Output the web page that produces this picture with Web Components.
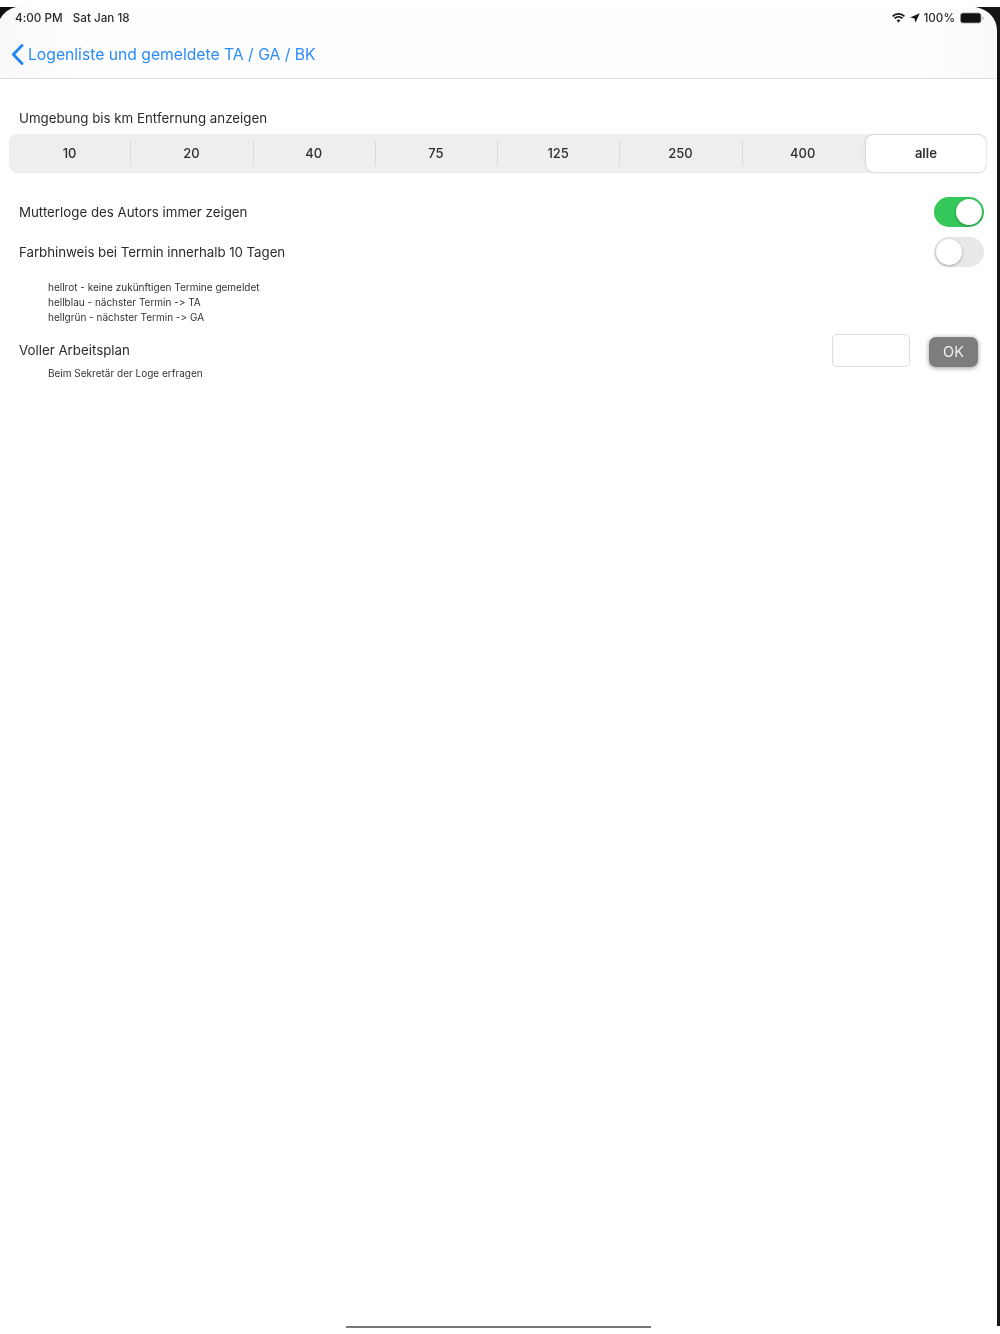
<!DOCTYPE html>
<html lang="de"><head><meta charset="utf-8"><title>Einstellungen</title>
<style>html,body{margin:0;padding:0;background:#fff}body{font-family:Inter,"Liberation Sans",sans-serif;color:#222;font-variant-ligatures:none;font-feature-settings:"calt" 0}</style>
</head><body>
<ipad-screen>
  <status-bar slot="top"></status-bar>
  <nav-bar slot="top" label="Logenliste und gemeldete TA / GA / BK"></nav-bar>
  <field-label style="margin:29px 0 0 19px">Umgebung bis km Entfernung anzeigen</field-label>
  <segment-control style="margin:6px 14px 0 9px" items="10,20,40,75,125,250,400,alle" selected="7"></segment-control>
  <setting-row style="margin-top:24px"><field-label>Mutterloge des Autors immer zeigen</field-label><toggle-switch on slot="end"></toggle-switch></setting-row>
  <setting-row style="margin-top:10px"><field-label style="letter-spacing:-.05px">Farbhinweis bei Termin innerhalb 10 Tagen</field-label><toggle-switch slot="end"></toggle-switch></setting-row>
  <hint-text style="margin-top:12.5px;line-height:15px"><div>hellrot - keine zukünftigen Termine gemeldet</div><div>hellblau - nächster Termin -&gt; TA</div><div>hellgrün - nächster Termin -&gt; GA</div></hint-text>
  <plan-row style="margin-top:9px"></plan-row>
  <home-bar></home-bar>
</ipad-screen>
<script>
function def(name, css, html, init){
  customElements.define(name, class extends HTMLElement{
    constructor(){super();const r=this.attachShadow({mode:'open'});r.innerHTML='<style>'+css+'</style>'+(typeof html==='function'?html(this):html);}
    connectedCallback(){if(init)init(this);}
  });
}
def('ipad-screen',`:host{display:flex;flex-direction:column;position:relative;width:1000px;height:1334px;overflow:hidden;background:#fff;filter:blur(.45px)}
 .top{display:block;padding-top:7px;height:71px;border-bottom:1px solid #e0e0e0;background:linear-gradient(90deg,#f9f9f9,#fefefe 8%,#fefefe 92%,#f9f9f9)}
 .frame{position:absolute;left:0;top:0;pointer-events:none}`,
 `<div class="top"><slot name="top"></slot></div><slot></slot>
 <svg class="frame" width="1000" height="1334" viewBox="0 0 1000 1334">
  <path d="M0 0H1000V7H0Z" fill="#fff"/>
  <path d="M0 7H16Q6 9 0 19Z" fill="#111"/>
  <path d="M976 7H1000V1326H997V30Q996 12 976 7Z" fill="#151515"/>
 </svg>`);
def('status-bar',`:host{display:flex;justify-content:space-between;align-items:center;height:22px;padding:0 16px 0 15px;font-size:11.7px;font-weight:500;color:#2a2a2a}
 .l span{margin-left:7px}.r{display:flex;align-items:center}svg{display:block}`,
 `<div class="l">4:00 PM <span>Sat Jan 18</span></div>
 <div class="r">
  <svg width="13" height="10" viewBox="0 0 15 11"><path d="M.6 3.6a10 10 0 0 1 13.8 0" fill="none" stroke="#111" stroke-width="2"/><path d="M3 6a6.6 6.6 0 0 1 9 0" fill="none" stroke="#111" stroke-width="2"/><path d="M5.3 8.2l2.2 2.4 2.2-2.4a3.2 3.2 0 0 0-4.4 0Z" fill="#111"/></svg>
  <svg width="10" height="10" viewBox="0 0 10 10" style="margin:0 3px 0 5px"><path d="M9.8.2 .2 4.6l4.4.8.8 4.4Z" fill="#111"/></svg>
  <span>100%</span>
  <svg width="24" height="12" viewBox="0 0 24 12" style="margin-left:5px"><rect x=".5" y="1" width="20.5" height="10" rx="2.5" fill="#111" stroke="#999" stroke-width=".8"/><path d="M22.3 4.2q1.4.6 1.4 1.8t-1.4 1.8Z" fill="#aaa"/></svg>
 </div>`);
def('nav-bar',`:host{display:flex;align-items:center;height:49px;padding:1px 0 0 11px;box-sizing:border-box;color:#2b8cf7;font-size:15.7px}
 svg{display:block;margin-right:4px}`,
 h=>`<svg width="13" height="21" viewBox="0 0 13 21"><path d="M11 1.5 2.3 10.5 11 19.5" fill="none" stroke="#1e85f5" stroke-width="2.8" stroke-linecap="round" stroke-linejoin="round"/></svg><span>${h.getAttribute('label')}</span>`);
def('field-label',`:host{display:block;font-size:13.3px;line-height:20px;color:#2b2b2b}`,`<slot></slot>`);
def('segment-control',`:host{display:grid;grid-template-columns:121.4fr repeat(7,122.4fr);height:39px;border-radius:8px;background:#eeeeee;font-size:13px;font-weight:500;color:#2f2f2f}
 .s{display:flex;align-items:center;justify-content:center;position:relative;padding-bottom:2px;box-sizing:border-box}
 .s+.s::before{content:"";position:absolute;left:0;top:7px;bottom:7px;width:1px;background:#d9d9d9}
 .s.on{background:#fff;border-radius:8px;margin:1px 0 1px 2px;box-shadow:0 0 3px rgba(0,0,0,.22);font-weight:600}
 .s.on::before,.s.on+.s::before{display:none}`,
 h=>h.getAttribute('items').split(',').map((t,i)=>`<div class="s${i==h.getAttribute('selected')?' on':''}">${t}</div>`).join(''));
def('setting-row',`:host{display:flex;align-items:center;justify-content:space-between;height:30px;padding:0 16px 0 19px}`,`<slot></slot><slot name="end"></slot>`);
def('toggle-switch',`:host{display:block;position:relative;width:50px;height:30px;border-radius:15px;background:#e8e8e8;box-sizing:border-box}
 :host([on]){background:#34c759}
 i{position:absolute;top:2px;left:2px;width:26px;height:26px;border-radius:50%;background:#fff;box-shadow:0 1px 3px rgba(0,0,0,.3)}
 :host([on]) i{left:22px}`,`<i></i>`);
def('hint-text',`:host{display:block;margin-left:48px;font-size:10px;line-height:14.7px;color:#333}`,`<slot></slot>`);
def('plan-row',`:host{display:flex;justify-content:space-between;padding:0 22px 0 19px;margin-top:10px}
 .f{display:flex;align-items:flex-start;gap:19px}
 .in{width:78px;height:33px;box-sizing:border-box;border:1px solid #ddd;border-radius:5px;background:#fff}
 button{all:unset;width:49px;height:30px;line-height:30px;margin-top:3px;border-radius:7px;background:#7d7d7d;color:#eee;font-family:Inter,"Liberation Sans",sans-serif;font-size:14.5px;text-align:center;box-shadow:0 1px 5px rgba(0,0,0,.4)}
 .t{padding-top:6.5px}`,
 `<div class="t"><field-label>Voller Arbeitsplan</field-label><hint-text style="margin:6px 0 0 29px">Beim Sekretär der Loge erfragen</hint-text></div>
 <div class="f"><div class="in"></div><button>OK</button></div>`);
def('home-bar',`:host{display:block;position:absolute;left:346px;top:1326px;width:305px;height:1.5px;background:#777}`,``);
</script>
</body></html>
